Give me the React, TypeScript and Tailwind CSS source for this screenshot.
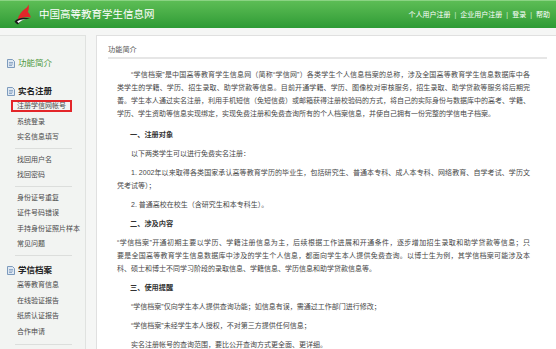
import React from "react";

const Logo = () => (
  <svg width="20" height="22" viewBox="0 0 20 22">
    <path d="M5.5 16 C6.5 11 9.5 7.5 13.5 4.5 C15 3.5 16 2 16.5 0.5 C17.2 3.5 16.8 6 15.8 8 C17.3 9 18.3 11 18.8 13.5 C15 12 10 13.5 5.5 16 Z" fill="#e3262a" />
    <path d="M2.5 17.5 C6 13.5 13 13 18 15 C13 14.5 8.5 16 6 20.5 C4.5 19.8 3.3 18.8 2.5 17.5 Z" fill="#1b1b1b" />
    <path d="M5 17.6 C7.5 15.6 11 15 14 15.2 C11 15.8 8.5 17 6.6 19 Z" fill="#ffffff" />
  </svg>
);

const DocIcon = () => (
  <svg width="8" height="9" viewBox="0 0 8 9">
    <path d="M0.5 0.5 H5.5 L7.5 2.5 V8.5 H0.5 Z" fill="#dfe8f2" stroke="#7d9bbd" strokeWidth="1" />
    <path d="M2 3.5 H6 M2 5 H6 M2 6.5 H5" stroke="#7d9bbd" strokeWidth="0.8" />
  </svg>
);

const Sep = ({ className = "" }: { className?: string }) => (
  <div className={`ml-[15px] w-[57px] h-px bg-[#dcdedc] ${className}`} />
);

const Item = ({ children }: { children: React.ReactNode }) => (
  <div className="pl-[17px] leading-[15.5px] text-[7px] text-[#4a4a4a] whitespace-nowrap">{children}</div>
);

const Line = ({
  children,
  full = false,
  indent = false,
}: {
  children: React.ReactNode;
  full?: boolean;
  indent?: boolean;
}) => (
  <div
    className={`whitespace-nowrap leading-[13px] ${full ? "text-justify [text-align-last:justify]" : ""} ${
      indent ? "pl-[14px]" : ""
    }`}
  >
    {children}
  </div>
);

const H = ({ children }: { children: React.ReactNode }) => (
  <div className="pl-[13px] leading-[13px] text-[7.2px] font-bold text-[#333] whitespace-nowrap">{children}</div>
);

export default function App() {
  return (
    <div className="w-[556px] h-[349px] overflow-hidden bg-[#f5f6f5] font-['Liberation_Sans','Noto_Sans_CJK_SC',sans-serif]">
      <header className="h-[28px] flex items-center justify-between bg-gradient-to-b from-[#5cbd55] to-[#2d9b35] border-t border-[#8ad383] pl-[12px] pr-[6px]">
        <div className="flex items-center gap-[7px]">
          <Logo />
          <span className="text-[10.5px] text-white leading-none">中国高等教育学生信息网</span>
        </div>
        <nav className="flex items-center gap-[4px] text-[7px] text-white leading-none">
          <span>个人用户注册</span>
          <span className="text-[#d6efd6]">|</span>
          <span>企业用户注册</span>
          <span className="text-[#d6efd6]">|</span>
          <span>登录</span>
          <span className="text-[#d6efd6]">|</span>
          <span>帮助</span>
        </nav>
      </header>

      <div className="flex items-start gap-[10px] pt-[7px] pr-[2px]">
        <aside className="w-[86px] h-[320px] shrink-0 bg-[#f2f4f2] border border-l-0 border-[#e0e2e0] pt-[20px]">
          <div className="flex items-center gap-[3px] pl-[7px] leading-[14px]">
            <DocIcon />
            <span className="text-[8.5px] text-[#4e9a40]">功能简介</span>
          </div>

          <div className="flex items-center gap-[3px] pl-[7px] leading-[14px] mt-[14px]">
            <DocIcon />
            <span className="text-[8.5px] font-bold text-[#222]">实名注册</span>
          </div>
          <div className="relative">
            <Item>注册学信网帐号</Item>
            <span className="absolute left-[11px] top-[1.5px] w-[61px] h-[12.5px] border-2 border-[#e3262a]" />
          </div>
          <Item>系统登录</Item>
          <Item>实名信息填写</Item>
          <Sep className="my-[3px]" />
          <Item>找回用户名</Item>
          <Item>找回密码</Item>
          <Sep className="my-[3px]" />
          <Item>身份证号重复</Item>
          <Item>证件号码错误</Item>
          <Item>手持身份证照片样本</Item>
          <Item>常见问题</Item>
          <Sep className="mt-[3px]" />

          <div className="flex items-center gap-[3px] pl-[7px] leading-[14px] mt-[7.5px]">
            <DocIcon />
            <span className="text-[8.5px] font-bold text-[#222]">学信档案</span>
          </div>
          <Item>高等教育信息</Item>
          <Item>在线验证报告</Item>
          <Item>纸质认证报告</Item>
          <Item>合作申请</Item>
          <Sep className="mt-[5px]" />
        </aside>

        <main className="flex-1 h-[320px] bg-white border border-[#e0e0e0] pl-[11px] pr-[10px] pt-[7px]">
          <div className="leading-[14px] text-[7.2px] text-[#555] border-b-2 border-[#e6e6e6]">功能简介</div>

          <div className="pl-[9px] pr-[17px] pt-[8.5px] flex flex-col gap-[6px] text-[7px] text-[#474747]">
            <div className="mb-[2px]">
              <Line full indent>“学信档案”是中国高等教育学生信息网（简称“学信网”）各类学生个人信息档案的总称，涉及全国高等教育学生信息数据库中各</Line>
              <Line full>类学生的学籍、学历、招生录取、助学贷款等信息。目前开通学籍、学历、图像校对审核服务，招生录取、助学贷款等服务将后期完</Line>
              <Line full>善。学生本人通过实名注册，利用手机短信（免短信费）或邮箱获得注册校验码的方式，将自己的实际身份与数据库中的高考、学籍、</Line>
              <Line>学历、学生资助等信息实现绑定，实现免费注册和免费查询所有的个人档案信息，并使自己拥有一份完整的学信电子档案。</Line>
            </div>

            <H>一、注册对象</H>
            <Line indent>以下两类学生可以进行免费实名注册：</Line>
            <div>
              <Line full indent>1. 2002年以来取得各类国家承认高等教育学历的毕业生，包括研究生、普通本专科、成人本专科、网络教育、自学考试、学历文</Line>
              <Line>凭考试等）；</Line>
            </div>
            <Line indent>2. 普通高校在校生（含研究生和本专科生）。</Line>

            <H>二、涉及内容</H>
            <div>
              <Line full>“学信档案”开通初期主要以学历、学籍注册信息为主，后续根据工作进展和开通条件，逐步增加招生录取和助学贷款等信息；只</Line>
              <Line full>要是全国高等教育学生信息数据库中涉及的学生个人信息，都面向学生本人提供免费查询。以博士生为例，其学信档案可能涉及本</Line>
              <Line>科、硕士和博士不同学习阶段的录取信息、学籍信息、学历信息和助学贷款信息等。</Line>
            </div>

            <H>三、使用提醒</H>
            <Line indent>“学信档案”仅向学生本人提供查询功能；如信息有误，需通过工作部门进行修改；</Line>
            <Line indent>“学信档案”未经学生本人授权，不对第三方提供任何信息；</Line>
            <Line indent>实名注册帐号的查询范围，要比公开查询方式更全面、更详细。</Line>
          </div>
        </main>
      </div>
    </div>
  );
}
